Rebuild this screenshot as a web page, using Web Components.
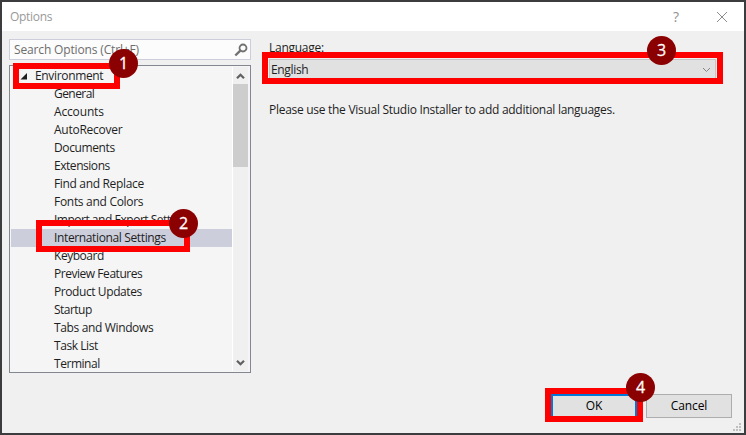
<!DOCTYPE html>
<html lang="en">
<head>
<meta charset="utf-8">
<title>Options</title>
<style>
html, body { margin: 0; width: 746px; height: 435px; overflow: hidden; }
body { font: 12px/18px "Open Sans", "Noto Sans", sans-serif; color: #1e1e1e; }
</style>
</head>
<body>
<options-dialog></options-dialog>
<script>
function define(name, html, setup) {
  const template = document.createElement('template');
  template.innerHTML = html;
  customElements.define(name, class extends HTMLElement {
    connectedCallback() {
      if (this.shadowRoot) return;
      this.attachShadow({ mode: 'open' }).append(template.content.cloneNode(true));
      if (setup) setup(this, this.shadowRoot);
    }
  });
}

/* One line of text, tracked so that it fills the width given in "w". */
define('fit-text', `<style>:host{display:inline-block;white-space:pre;flex:none} span{display:inline-block}</style><span><slot></slot></span>`,
  (host, root) => {
    const span = root.querySelector('span');
    const gap = (Number(host.getAttribute('w')) - 0.7 - span.getBoundingClientRect().width) / host.textContent.length;
    span.style.letterSpacing = gap.toFixed(3) + 'px';
  });

define('title-bar', `<style>
  :host{display:flex;align-items:center;height:29px;background:#fff;color:#999;padding:0 16px 0 8px}
  .help{margin-left:auto;font-size:14px;color:#909090;width:10px;text-align:center;margin-right:35px}
  svg{display:block}
</style><fit-text w="43">Options</fit-text><span class="help">?</span>
<svg width="12" height="12" viewBox="0 0 12 12" stroke="#8c8c8c" fill="none"><path d="M1 1L11 11M11 1L1 11"/></svg>`);

define('search-box', `<style>
  :host{display:flex;align-items:center;justify-content:space-between;box-sizing:border-box;height:21px;border:1px solid #ccceDB;background:#fcfcfc;color:#6d6d6d;padding:0 2px 0 4px}
  fit-text{padding-top:1px}
</style><fit-text w="125.7">Search Options (Ctrl+F)</fit-text>
<svg width="14" height="14" viewBox="0 0 14 14" fill="none" stroke="#717171"><circle cx="9" cy="5" r="3.5" stroke-width="1.8"/><path d="M6.3 7.7L1.3 12.5" stroke-width="2.4"/></svg>`);

define('tree-item', `<style>
  :host{display:flex;height:18px;padding-left:43px}
  :host([selected]){background:#cccedb}
  :host([root]){padding-left:9px;gap:7px}
  svg{display:none;margin-top:6px}
  :host([root]) svg{display:block}
</style><svg width="8" height="7"><path d="M7 0V6.5H.5Z" fill="#1e1e1e"/></svg><slot></slot>`);

define('scroll-bar', `<style>
  :host{display:flex;flex-direction:column;box-sizing:border-box;width:17px;background:#f0f0f0;border-left:1px solid #fff;border-right:1px solid #f5f5f5}
  svg{display:block;flex:none}
  i{display:block;height:83px;background:#cdcdcd}
  b{flex:1}
</style><svg width="15" height="17" fill="none" stroke="#606060" stroke-width="2.2"><path d="M4 11.3L7.5 7.8L11 11.3"/></svg><i></i><b></b>
<svg width="15" height="17" fill="none" stroke="#606060" stroke-width="2.2"><path d="M4 6.7L7.5 10.2L11 6.7"/></svg>`);

define('tree-view', `<style>
  :host{display:flex;box-sizing:border-box;height:308px;border:1px solid #828790;background:#f5f5f5;padding:1px}
  .list{flex:1;min-width:0}
</style><div class="list"></div><scroll-bar></scroll-bar>`, (host, root) => {
  const items = [['Environment', 69], ['General', 41], ['Accounts', 50.5], ['AutoRecover', 69], ['Documents', 61.5],
    ['Extensions', 56.5], ['Find and Replace', 90.5], ['Fonts and Colors', 90], ['Import and Export Settings', 138],
    ['International Settings', 112.5], ['Keyboard', 50.5], ['Preview Features', 89], ['Product Updates', 88.5],
    ['Startup', 38.5], ['Tabs and Windows', 100], ['Task List', 44.5], ['Terminal', 46.5]];
  root.querySelector('.list').innerHTML = items.map(([text, w], i) =>
    `<tree-item${i === 0 ? ' root' : ''}${i === 9 ? ' selected' : ''}><fit-text w="${w}">${text}</fit-text></tree-item>`).join('');
});

define('combo-box', `<style>
  :host{display:flex;align-items:center;justify-content:space-between;box-sizing:border-box;height:22px;width:447px;border:1px solid #c6c6c6;background:#e1e1e1;padding:0 4px 0 1px}
</style><slot></slot><svg width="9" height="6" fill="none" stroke="#858585"><path d="M1 1L4.5 4.5L8 1"/></svg>`);

define('push-button', `<style>
  :host{display:flex;align-items:center;justify-content:center;box-sizing:border-box;width:86px;height:24px;border:1px solid #adadad;background:#e1e1e1}
  :host([primary]){border:2px solid #0078d7}
</style><slot></slot>`);

/* Red outline with a numbered disc, laid over the dialog. */
define('call-out', `<style>
  :host{position:absolute;box-sizing:border-box;border:6px solid #f00}
  b{position:absolute;width:29px;height:29px;border-radius:50%;background:#8b0000;color:#fff;font:16px/28px "Open Sans",sans-serif;-webkit-text-stroke:.3px #fff;text-align:center}
</style><b></b>`, (host, root) => {
  const [x, y, w, h, cx, cy] = host.getAttribute('box').split(' ').map(Number);
  host.style.cssText = `left:${x}px;top:${y}px;width:${w}px;height:${h}px`;
  const disc = root.querySelector('b');
  disc.style.left = cx - x - 20.5 + 'px';
  disc.style.top = cy - y - 20.5 + 'px';
  disc.textContent = host.getAttribute('step');
});

define('options-dialog', `<style>
  :host{display:flex;flex-direction:column;position:relative;box-sizing:border-box;width:746px;height:435px;border:2px solid #3c3b3d;background:#f0f0f0}
  .body{display:flex;padding:8px 7px 0;gap:18px}
  .left{display:flex;flex-direction:column;gap:5px;width:242px}
  .right{display:flex;flex-direction:column;align-items:flex-start}
  .label{height:20px}
  .note{margin-top:20px}
  .foot{display:flex;justify-content:flex-end;gap:9px;margin-top:21px;padding-right:12px;color:#000}
  .grip{position:absolute;right:2px;bottom:1px}
</style>
<title-bar></title-bar>
<div class="body">
  <div class="left"><search-box></search-box><tree-view></tree-view></div>
  <div class="right">
    <fit-text class="label" w="55.5">Language:</fit-text>
    <combo-box><fit-text w="38">English</fit-text></combo-box>
    <fit-text class="note" w="346.5">Please use the Visual Studio Installer to add additional languages.</fit-text>
  </div>
</div>
<div class="foot"><push-button primary><fit-text w="17">OK</fit-text></push-button><push-button><fit-text w="37">Cancel</fit-text></push-button></div>
<svg class="grip" width="9" height="9" fill="#bfbfbf"><path d="M6 0h2v2h-2zM3 3h2v2h-2zM6 3h2v2h-2zM0 6h2v2h-2zM3 6h2v2h-2zM6 6h2v2h-2z"/></svg>
<call-out step="1" box="11 61 107 26 121.5 61.5"></call-out>
<call-out step="2" box="34 218 154 32 181.5 221.5"></call-out>
<call-out step="3" box="260 50 461 32 659.5 48.5"></call-out>
<call-out step="4" box="543 386 98 34 638.5 385.5"></call-out>`);
</script>
</body>
</html>
